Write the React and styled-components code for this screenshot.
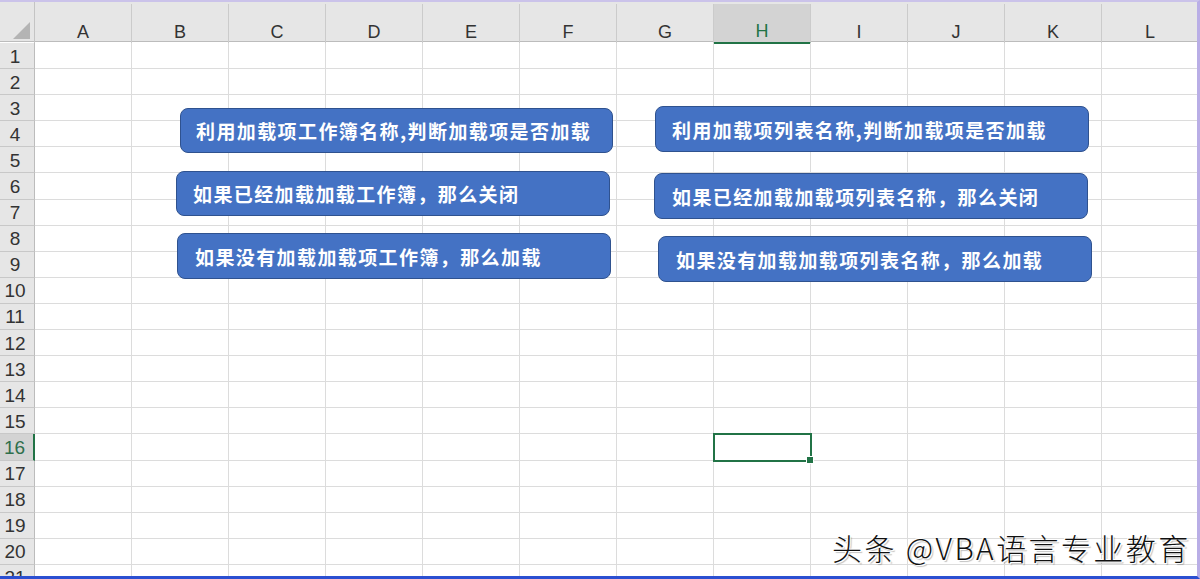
import React from "react";
import styled, { createGlobalStyle } from "styled-components";

const Global = createGlobalStyle`
  html, body {
    margin: 0;
    padding: 0;
    background: #ffffff;
    overflow: hidden;
  }
`;

const COLS = ["A", "B", "C", "D", "E", "F", "G", "H", "I", "J", "K", "L"];
const ROWS = Array.from({ length: 21 }, (_, i) => i + 1);
const ACTIVE_COL = "H";
const ACTIVE_ROW = 16;

const Frame = styled.div`
  width: 1200px;
  height: 579px;
  box-sizing: border-box;
  border-top: 2px solid #cbc3ea;
  border-right: 3px solid #b9aee6;
  border-bottom: 3px solid #2b4fd1;
  overflow: hidden;
  position: relative;
  display: flex;
  flex-direction: column;
  font-family: "Liberation Sans", "Noto Sans CJK SC", sans-serif;
`;

const Grid = styled.div`
  display: grid;
  grid-template-columns: 35px repeat(12, 97px);
  flex: none;
`;

const HeaderRow = styled(Grid)`
  height: 39px;
  background: #e6e6e6;
  border-bottom: 1px solid #bcbcbc;
`;

const Corner = styled.div`
  position: relative;
  border-right: 1px solid #c4c4c4;
`;

const CornerMark = styled.div`
  position: absolute;
  right: 4px;
  bottom: 4px;
  width: 0;
  height: 0;
  border-left: 17px solid transparent;
  border-bottom: 17px solid #b4b4b4;
`;

const ColHead = styled.div`
  box-sizing: border-box;
  display: flex;
  align-items: center;
  justify-content: center;
  padding-top: 17px;
  margin-top: 2px;
  font-size: 18px;
  color: ${(p) => (p.$active ? "#217346" : "#333333")};
  background: ${(p) => (p.$active ? "#d3d3d3" : "transparent")};
  border-right: 1px solid #cbcbcb;
  border-bottom: ${(p) => (p.$active ? "2px solid #217346" : "0")};
  margin-bottom: ${(p) => (p.$active ? "-1px" : "0")};
`;

const Body = styled.div`
  position: relative;
  flex: none;
  padding-top: 1px;
`;

const Row = styled(Grid)`
  height: 26.1px;
`;

const RowHead = styled.div`
  box-sizing: border-box;
  display: flex;
  align-items: center;
  justify-content: center;
  padding-right: 4px;
  padding-top: 2px;
  font-size: 19px;
  color: ${(p) => (p.$active ? "#2f6f4c" : "#333333")};
  background: ${(p) => (p.$active ? "#d3d3d3" : "#e6e6e6")};
  border-bottom: 1px solid #c8c8c8;
  border-right: ${(p) => (p.$active ? "2px solid #217346" : "1px solid #bcbcbc")};
`;

const Cell = styled.div`
  box-sizing: border-box;
  border-right: 1px solid #dcdcdc;
  border-bottom: 1px solid #dcdcdc;
  position: relative;
`;

const Selection = styled.div`
  position: absolute;
  left: -1px;
  top: -1px;
  right: -2px;
  bottom: -2px;
  border: 2px solid #217346;
  pointer-events: none;
  z-index: 2;
`;

const Handle = styled.div`
  position: absolute;
  right: -4px;
  bottom: -4px;
  width: 6px;
  height: 6px;
  background: #217346;
  border: 1px solid #ffffff;
`;

const Shape = styled.div`
  position: absolute;
  left: ${(p) => p.$x}px;
  top: ${(p) => p.$y}px;
  width: ${(p) => p.$w}px;
  height: ${(p) => p.$h}px;
  box-sizing: border-box;
  background: #4472c4;
  border: 1.5px solid #2f528f;
  border-radius: 8px;
  display: flex;
  align-items: center;
  padding-left: ${(p) => p.$pad}px;
  color: #ffffff;
  font-family: "Noto Sans CJK SC", "Noto Sans", sans-serif;
  font-weight: 700;
  font-size: 19px;
  letter-spacing: 1.4px;
  white-space: nowrap;
  z-index: 3;
`;

const Watermark = styled.div`
  position: absolute;
  left: 832px;
  top: 526px;
  font-family: "Noto Sans CJK SC", "Noto Sans", sans-serif;
  font-weight: 300;
  font-size: 30px;
  line-height: 38px;
  color: #111111;
  letter-spacing: 2.4px;
  text-shadow: 1px 1px 0 #ffffff, -1px -1px 0 #ffffff, 2px 2px 1px rgba(0, 0, 0, 0.25);
  white-space: nowrap;
  z-index: 4;
`;

const shapes = [
  { x: 180, y: 66, w: 433, h: 45, pad: 15, text: "利用加载项工作簿名称,判断加载项是否加载" },
  { x: 655, y: 64, w: 434, h: 46, pad: 16, text: "利用加载项列表名称,判断加载项是否加载" },
  { x: 176, y: 129, w: 434, h: 45, pad: 16, text: "如果已经加载加载工作簿，那么关闭" },
  { x: 654, y: 131, w: 434, h: 46, pad: 17, text: "如果已经加载加载项列表名称，那么关闭" },
  { x: 177, y: 191, w: 434, h: 46, pad: 17, text: "如果没有加载加载项工作簿，那么加载" },
  { x: 658, y: 194, w: 434, h: 46, pad: 17, text: "如果没有加载加载项列表名称，那么加载" },
];

export default function App() {
  return (
    <>
      <Global />
      <Frame>
        <HeaderRow>
          <Corner>
            <CornerMark />
          </Corner>
          {COLS.map((c) => (
            <ColHead key={c} $active={c === ACTIVE_COL}>
              {c}
            </ColHead>
          ))}
        </HeaderRow>
        <Body>
          {ROWS.map((r) => (
            <Row key={r}>
              <RowHead $active={r === ACTIVE_ROW}>{r}</RowHead>
              {COLS.map((c) => (
                <Cell key={c}>
                  {r === ACTIVE_ROW && c === ACTIVE_COL && (
                    <Selection>
                      <Handle />
                    </Selection>
                  )}
                </Cell>
              ))}
            </Row>
          ))}
          {shapes.map((s) => (
            <Shape key={s.text} $x={s.x} $y={s.y} $w={s.w} $h={s.h} $pad={s.pad}>
              {s.text}
            </Shape>
          ))}
        </Body>
        <Watermark>头条 @VBA语言专业教育</Watermark>
      </Frame>
    </>
  );
}
